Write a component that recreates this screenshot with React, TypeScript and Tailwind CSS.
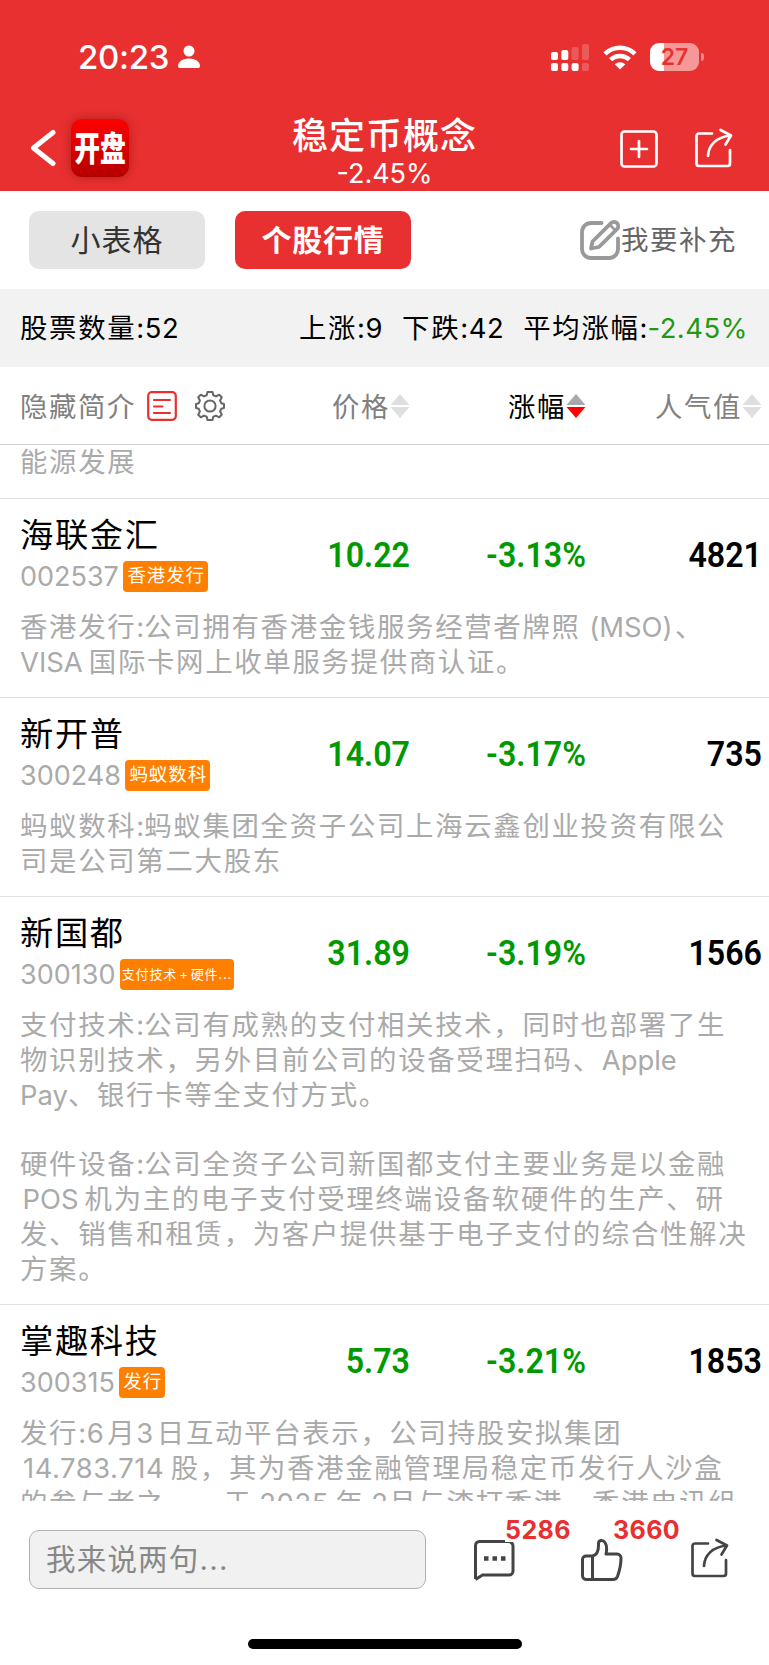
import clsx from 'clsx';

interface Stock {
  name: string;
  code: string;
  tag: string;
  smallTag?: boolean;
  price: string;
  change: string;
  heat: string;
  intro: string[];
}

const stocks: Stock[] = [
  {
    name: '海联金汇',
    code: '002537',
    tag: '香港发行',
    price: '10.22',
    change: '-3.13%',
    heat: '4821',
    intro: ['香港发行:公司拥有香港金钱服务经营者牌照\u200a (MSO)\u200a、', 'VISA 国际卡网上收单服务提供商认证。'],
  },
  {
    name: '新开普',
    code: '300248',
    tag: '蚂蚁数科',
    price: '14.07',
    change: '-3.17%',
    heat: '735',
    intro: ['蚂蚁数科:蚂蚁集团全资子公司上海云鑫创业投资有限公', '司是公司第二大股东'],
  },
  {
    name: '新国都',
    code: '300130',
    tag: '支付技术\u200a+\u200a硬件...',
    smallTag: true,
    price: '31.89',
    change: '-3.19%',
    heat: '1566',
    intro: [
      '支付技术:公司有成熟的支付相关技术，同时也部署了生',
      '物识别技术，另外目前公司的设备受理扫码、Apple',
      'Pay、银行卡等全支付方式。',
      '',
      '硬件设备:公司全资子公司新国都支付主要业务是以金融',
      '\u200aPOS 机为主的电子支付受理终端设备软硬件的生产、研',
      '发、销售和租赁，为客户提供基于电子支付的综合性解决',
      '方案。',
    ],
  },
  {
    name: '掌趣科技',
    code: '300315',
    tag: '发行',
    price: '5.73',
    change: '-3.21%',
    heat: '1853',
    intro: [
      '发行:6\u200a月3\u200a日互动平台表示，公司持股安拟集团',
      '\u200a14.783.714 股，其为香港金融管理局稳定币发行人沙盒',
      '的参与者之一，于 2025 年 2月与渣打香港、香港电讯组',
    ],
  },
];

// Chinese runs are tracked wider than the latin ones
function Mixed({ text }: { text: string }) {
  const parts = text.split(/([\u2e80-\u9fff\u3000-\u303f\uff00-\uffef]+)/);
  return (
    <>
      {parts.map((part, i) =>
        i % 2 ? (
          <span key={i} className="tracking-[0.062em]">{part}</span>
        ) : (
          <span key={i} className={clsx('[word-spacing:-0.06em]', /\d/.test(part) ? 'tracking-[0.02em]' : 'tracking-normal')}>{part}</span>
        )
      )}
    </>
  );
}

function ShareIcon({ className }: { className?: string }) {
  return (
    <svg width="38" height="40" viewBox="0 0 38 40" fill="none" stroke="currentColor" strokeWidth="2.7" strokeLinecap="round" strokeLinejoin="round" className={className}>
      <path d="M17 5.500H4A2.500 2.500 0 0 0 1.500 8V35.500A2.500 2.500 0 0 0 4 38H32.500A2.500 2.500 0 0 0 35 35.500V22" />
      <path d="M13 28C13.500 17.500 21 9 35.500 7.500M25.500 2L36 7.500 30.500 16.500" />
    </svg>
  );
}

function SortArrows({ active }: { active?: boolean }) {
  return (
    <svg width="20" height="26" viewBox="0 0 20 26" className="-mt-[3px]">
      <path d="M10 1L19.500 12H0.500Z" className={active ? 'fill-[#a9a9a9]' : 'fill-[#dedede]'} />
      <path d="M10 25L0.500 14H19.500Z" className={active ? 'fill-[#ff0000]' : 'fill-[#dedede]'} />
    </svg>
  );
}

function StatusBar() {
  return (
    <div className="flex h-[115px] items-start justify-between pl-[78px] pr-[65px] pt-[37px]">
      <div className="flex h-10 items-center">
        <span className="text-[33px] font-medium leading-10 tracking-[-0.3px]">20:23</span>
        <svg width="22" height="24" viewBox="0 0 22 24" fill="currentColor" className="ml-[9px]">
          <circle cx="11" cy="6" r="5.500" />
          <path d="M0 21C0 16.500 5 13.500 11 13.500S22 16.500 22 21c0 1.500-1 2-2.500 2h-17C1 23 0 22.500 0 21Z" />
        </svg>
      </div>
      <div className="flex h-10 items-center">
        <svg width="38" height="28" viewBox="0 0 38 28" fill="currentColor">
          <rect x="0" y="9" width="7" height="8" rx="2" />
          <rect x="10.300" y="7" width="7" height="10" rx="2" />
          <rect x="20.600" y="4" width="7" height="13" rx="2" opacity=".2" />
          <rect x="31" y="1" width="7" height="16" rx="2" opacity=".2" />
          <rect x="0" y="20" width="7" height="8" rx="2" />
          <rect x="10.300" y="20" width="7" height="8" rx="2" />
          <rect x="20.600" y="20" width="7" height="8" rx="2" />
          <rect x="31" y="20" width="7" height="8" rx="2" opacity=".2" />
        </svg>
        <svg width="34" height="25" viewBox="0 0 34 25" fill="none" stroke="currentColor" strokeWidth="4.600" className="ml-3.5">
          <path d="M2 8.800C10.500 .700 23.500 .700 32 8.800" />
          <path d="M7.600 14.600C13 9.700 21 9.700 26.400 14.600" />
          <path d="M17 24.500L11.700 19.200C14.700 16.500 19.300 16.500 22.300 19.200Z" fill="currentColor" stroke="none" />
        </svg>
        <div className="ml-[13px] flex items-center">
          <div className="flex h-7 w-[49px] items-center justify-center rounded-[9px] bg-[linear-gradient(to_right,#fff_28%,#f59898_28%)] text-[23px] font-semibold text-[#e83232]">
            27
          </div>
          <div className="ml-0.5 h-2 w-[3px] rounded-r-full bg-[#f28585]" />
        </div>
      </div>
    </div>
  );
}

function NavBar() {
  return (
    <div className="grid h-[76px] grid-cols-[1fr_auto_1fr] items-start">
      <div className="flex h-[66px] items-center pl-[30px]">
        <svg width="26" height="38" viewBox="0 0 26 38" fill="none" stroke="currentColor" strokeWidth="5" strokeLinecap="round" strokeLinejoin="round">
          <path d="M23 3.500L3.500 19 23 34.500" />
        </svg>
        <div className="ml-[15px] flex size-[58px] items-center justify-center rounded-[11px] bg-linear-to-b from-[#ff0000] to-[#b50000] shadow-[0_0_10px_rgba(90,0,0,0.4)]">
          <span className="scale-x-[0.76] whitespace-nowrap pt-0.5 text-[34px] font-black leading-none">开盘</span>
        </div>
      </div>
      <div className="pt-px text-center">
        <h1 className="text-[36px] font-medium leading-10 tracking-[1px]">稳定币概念</h1>
        <p className="mt-0.5 text-[27px] leading-8">-2.45%</p>
      </div>
      <div className="flex h-[68px] items-center justify-end pr-[36px]">
        <svg width="38" height="38" viewBox="0 0 38 38" fill="none" stroke="currentColor" strokeWidth="2.700" strokeLinecap="round">
          <rect x="1.500" y="1.500" width="35" height="35" rx="3" />
          <path d="M11 19h16M19 11v16" />
        </svg>
        <ShareIcon className="-mt-0.5 ml-[37px]" />
      </div>
    </div>
  );
}

function Tabs() {
  return (
    <div className="flex h-[98px] items-center px-[29px]">
      <button className="h-[58px] w-[176px] rounded-[10px] bg-[#e4e4e4] text-[30px] tracking-[1px] text-[#333]">小表格</button>
      <button className="ml-[30px] h-[58px] w-[176px] rounded-[10px] bg-[#e83030] text-[30px] font-bold tracking-[0.800px] text-white">个股行情</button>
      <button className="ml-auto flex items-center text-[27.500px] tracking-[1.500px] text-[#666]">
        <svg width="41" height="41" viewBox="0 0 41 41" fill="none" stroke="#999" strokeWidth="3.800" strokeLinecap="round" strokeLinejoin="round" className="-mt-0.5">
          <path d="M21.500 4H11a9 9 0 0 0-9 9v17a9 9 0 0 0 9 9h18a9 9 0 0 0 9-9V19.500" />
          <path d="M11 29.500L12.500 22.500 31 4.200a4.200 4.200 0 0 1 6 6L19 28Z" />
          <path d="M30.500 6.500L35 11" strokeWidth="2.500" />
        </svg>
        <span className="mr-[3px] pt-0.5">我要补充</span>
      </button>
    </div>
  );
}

function ColumnHeader() {
  return (
    <div className="grid h-[78px] grid-cols-[250px_160px_176px_176px] items-center border-b border-[#cfcfcf] pt-1 text-[27.400px] tracking-[1.600px] text-[#808080]">
      <div className="flex items-center pl-5">
        <span>隐藏简介</span>
        <svg width="30" height="30" viewBox="0 0 30 30" fill="none" stroke="#e83030" strokeWidth="2.200" strokeLinecap="round" className="-mt-0.5 ml-[11px] shrink-0">
          <rect x="1.200" y="1.200" width="27.600" height="27.600" rx="3.500" />
          <path d="M7 9h16M7 15.500h8.500M7 22h16" />
        </svg>
        <svg width="30" height="30" viewBox="0 0 30 30" fill="none" stroke="#666" strokeWidth="2" strokeLinejoin="round" className="-mt-0.5 ml-[18px] shrink-0">
          <path d="M12.500 1h5l.8 3.300 2.700 1.100 3.200-1.700 2.600 2.600-1.700 3.200 1.100 2.700 2.800.8v4l-2.800.8-1.100 2.700 1.700 3.200-2.600 2.600-3.200-1.700-2.700 1.100-.8 3.300h-5l-.8-3.300-2.700-1.100-3.200 1.700-2.600-2.600 1.700-3.200-1.100-2.700L1 17v-4l2.800-.8 1.100-2.700-1.700-3.200 2.600-2.600L9 5.400l2.700-1.100Z" />
          <circle cx="15" cy="15" r="5.600" />
        </svg>
      </div>
      <div className="flex items-center justify-end">价格<SortArrows /></div>
      <div className="flex items-center justify-end text-black">涨幅<SortArrows active /></div>
      <div className="flex items-center justify-end">人气值<SortArrows /></div>
    </div>
  );
}

function Intro({ lines }: { lines: string[] }) {
  return (
    <div className="pl-5 text-[27.400px] leading-[34.850px] text-[#aaa]">
      {lines.map((line, i) => (
        <p key={i} className="h-[34.850px] whitespace-pre"><Mixed text={line} /></p>
      ))}
    </div>
  );
}

function StockRow({ stock }: { stock: Stock }) {
  const num = 'mt-[3px] origin-right scale-x-[0.92] text-right font-[Roboto] text-[35px] font-semibold leading-none';
  return (
    <div className="border-t border-[#e2e2e2] pb-[17.300px]">
      <div className="grid h-[111px] grid-cols-[250px_160px_176px_176px] items-center">
        <div className="pb-1 pl-5">
          <h2 className="text-[33.300px] leading-[44px] tracking-[1.600px] text-black">{stock.name}</h2>
          <div className="mt-1 flex h-[31px] items-center">
            <span className="text-[27px] leading-none text-[#aaa]">{stock.code}</span>
            <span
              className={clsx(
                'ml-[4.500px] flex h-[31px] items-center whitespace-pre rounded-[4px] bg-[#ff8000] text-white',
                stock.smallTag ? 'w-[114px] justify-center text-[13px] tracking-[0.850px]' : 'pl-1 pr-[3px] text-[18.500px] tracking-[0.900px]'
              )}
            >
              {stock.tag}
            </span>
          </div>
        </div>
        <span className={clsx(num, 'text-[#009900]')}>{stock.price}</span>
        <span className={clsx(num, 'text-[#009900]')}>{stock.change}</span>
        <span className={clsx(num, 'text-black')}>{stock.heat}</span>
      </div>
      <Intro lines={stock.intro} />
    </div>
  );
}

function BottomBar() {
  return (
    <div className="flex h-[164px] flex-col items-center bg-white pt-[29px]">
      <div className="flex h-[59px] w-full items-center pl-[29px] text-[#444]">
        <div className="flex h-[59px] w-[397px] items-center rounded-[10px] border border-[#b0b0b0] bg-[#f1f1f1] pl-4 text-[29.500px] tracking-[1.200px] text-[#888]">
          我来说两句...
        </div>
        <div className="relative ml-[47px]">
          <svg width="42" height="42" viewBox="0 0 42 42" fill="none" stroke="currentColor" strokeWidth="3">
            <path d="M2.500 40V6.500a4 4 0 0 1 4-4h29a4.500 4.500 0 0 1 4.500 4.500V32a4 4 0 0 1-4 4H9.500L2.500 40.500" />
            <path d="M11 19.500h4.500M19.500 19.500h4.500M28 19.500h4.500" strokeWidth="4.500" />
          </svg>
          <span className="absolute -top-[21px] left-[32px] bg-white text-[25px] font-bold leading-[24px] tracking-[0.400px] text-[#e83030]">5286</span>
        </div>
        <div className="relative ml-[66px]">
          <svg width="42" height="42" viewBox="0 0 42 42" fill="none" stroke="currentColor" strokeWidth="3" strokeLinejoin="round">
            <path d="M11.500 17C16 16 17.500 11 17.500 6.500V4.500C17.500 1 22 .5 24 3.500c2 3 2 7 1 11.500h11a4 4 0 0 1 4 4.200c0 7-1.500 12.500-3.500 18.300C35.500 40 34.500 40.500 32 40.500H5.500a4 4 0 0 1-4-4V20.500a3.500 3.500 0 0 1 3.500-3.500Z" />
            <path d="M11.500 17v23.500" />
          </svg>
          <span className="absolute -top-[21px] left-[32px] text-[25px] font-bold leading-[24px] tracking-[0.400px] text-[#e83030]">3660</span>
        </div>
        <ShareIcon className="-mt-[3px] ml-[68px]" />
      </div>
      <div className="mt-[50px] h-2.5 w-[274px] rounded-full bg-black" />
    </div>
  );
}

export default function App() {
  return (
    <div className="flex h-[1665px] w-[769px] flex-col overflow-hidden bg-white font-[Inter,'Noto_Sans_CJK_SC',sans-serif]">
      <header className="h-[191px] shrink-0 bg-[#e83030] text-white">
        <StatusBar />
        <NavBar />
      </header>
      <Tabs />
      <div className="flex h-[78px] shrink-0 items-center bg-[#f2f2f2] pl-5 pr-[21px] pt-0.5 text-[27.400px] text-black">
        <span><Mixed text="股票数量:52" /></span>
        <span className="ml-auto"><Mixed text="上涨:9" /></span>
        <span className="ml-[19px]"><Mixed text="下跌:42" /></span>
        <span className="ml-[19px]"><Mixed text="平均涨幅:" /><span className="tracking-[0.5px] text-[#229911]">-2.45%</span></span>
      </div>
      <ColumnHeader />

      {/* Scrolled list, first entry cut by the column header */}
      <main className="min-h-0 flex-1 overflow-hidden">
        <div className="pb-[18px]">
          <Intro lines={['能源发展']} />
        </div>
        {stocks.map((stock) => (
          <StockRow key={stock.code} stock={stock} />
        ))}
      </main>
      <BottomBar />
    </div>
  );
}
